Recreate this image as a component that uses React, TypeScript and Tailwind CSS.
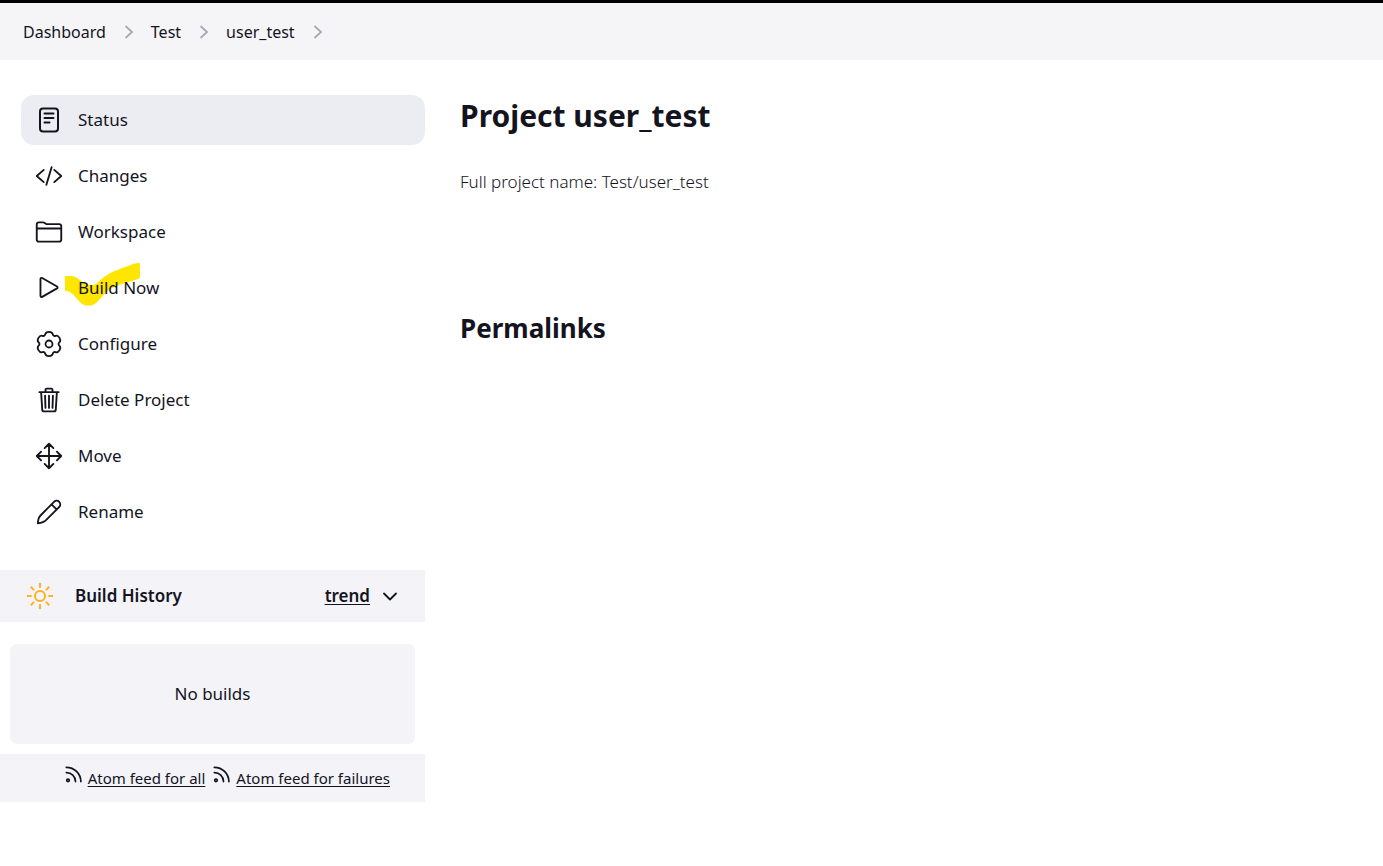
import type { ReactNode } from "react";

const strokeProps = {
  viewBox: "0 0 512 512",
  fill: "none",
  stroke: "currentColor",
  strokeWidth: 34,
  strokeLinecap: "round" as const,
  strokeLinejoin: "round" as const,
  "aria-hidden": true,
};

// Outline of a six-lobed gear centred in a 28-unit box, smoothed with quadratic curves.
function gearPath() {
  const points: [number, number][] = [];
  for (let lobe = 0; lobe < 6; lobe++) {
    const base = lobe * 60 - 90;
    for (const [offset, radius] of [[-15, 12.6], [15, 12.6], [30, 8.6]]) {
      const angle = ((base + offset) * Math.PI) / 180;
      points.push([14 + radius * Math.cos(angle), 14 + radius * Math.sin(angle)]);
    }
  }
  const mid = (i: number) => {
    const a = points[i % points.length];
    const b = points[(i + 1) % points.length];
    return `${((a[0] + b[0]) / 2).toFixed(2)} ${((a[1] + b[1]) / 2).toFixed(2)}`;
  };
  let d = `M${mid(0)}`;
  for (let i = 1; i <= points.length; i++) {
    const p = points[i % points.length];
    d += `Q${p[0].toFixed(2)} ${p[1].toFixed(2)} ${mid(i)}`;
  }
  return d + "z";
}

const icons: Record<string, ReactNode> = {
  Status: (
    <svg {...strokeProps} viewBox="0 0 28 28" strokeWidth={2} className="size-7">
      <rect x="5" y="2.5" width="18" height="23" rx="3" />
      <path d="M9.5 7.5h9M9.5 12h9M9.5 16.5h5" />
    </svg>
  ),
  Changes: (
    <svg {...strokeProps} className="size-7">
      <path d="M160 368L32 256l128-112M352 368l128-112-128-112M304 96l-96 320" />
    </svg>
  ),
  Workspace: (
    <svg {...strokeProps} className="size-7">
      <path d="M440 432H72a40 40 0 01-40-40V120a40 40 0 0140-40h75.89a40 40 0 0122.19 6.72l27.84 18.56a40 40 0 0022.19 6.72H440a40 40 0 0140 40v240a40 40 0 01-40 40zM32 192h448" />
    </svg>
  ),
  "Build Now": (
    <svg {...strokeProps} className="size-7">
      <path d="M100 93v306c0 17 17 28 31 20l272-156c13-8 13-26 0-34L131 73c-14-8-31 3-31 20z" />
    </svg>
  ),
  Configure: (
    <svg {...strokeProps} viewBox="0 0 28 28" strokeWidth={1.8} className="size-7">
      <path d={gearPath()} />
      <circle cx="14" cy="14" r="3.5" />
    </svg>
  ),
  "Delete Project": (
    <svg {...strokeProps} className="size-7">
      <path d="M112 112l20 320c.95 18.49 14.4 32 32 32h184c17.67 0 30.87-13.51 32-32l20-320M80 112h352M192 112V72a23.93 23.93 0 0124-24h80a23.93 23.93 0 0124 24v40M256 176v224M184 176l8 224M328 176l-8 224" />
    </svg>
  ),
  Move: (
    <svg {...strokeProps} className="size-7">
      <path d="M176 112l80-80 80 80M256 32v448M176 400l80 80 80-80M400 176l80 80-80 80M112 176l-80 80 80 80M32 256h448" />
    </svg>
  ),
  Rename: (
    <svg {...strokeProps} viewBox="0 0 28 28" strokeWidth={1.8} className="size-7">
      <path d="M2.8 25.3C3 22 4 19 5.5 17.5L19 3.8a3.6 3.6 0 0 1 5.2 5.2L10.5 22.6C9 24 6 25 2.8 25.3zM16.5 6.3l5.2 5.2" />
    </svg>
  ),
};

function Chevron() {
  return (
    <svg viewBox="0 0 10 16" className="h-4 w-[10px] text-[#a9a7b8]" fill="none" stroke="currentColor" strokeWidth="1.8" aria-hidden>
      <path d="M1.5 2l6.5 6-6.5 6" />
    </svg>
  );
}

function FeedLink({ label }: { label: string }) {
  return (
    <a href="#" className="flex gap-[6px] text-[15px] leading-6 underline underline-offset-2">
      <svg viewBox="0 0 17 17" className="size-[17px]" fill="none" stroke="currentColor" strokeWidth="1.7" strokeLinecap="round" aria-hidden>
        <circle cx="3" cy="14.3" r="1.3" />
        <path d="M1.3 6.6a9 9 0 0 1 9.2 9M1.3 1.3a14.5 14.5 0 0 1 14.6 14.3" />
      </svg>
      {label}
    </a>
  );
}

export default function App() {
  return (
    <div className="font-['Noto_Sans','Segoe_UI',sans-serif] text-[#14141f]">
      <nav aria-label="Breadcrumb" className="border-t-[3px] border-black bg-[#f5f5f8]">
        <ol className="flex h-[57px] items-center gap-[17px] px-[23px] text-[16px]">
          {["Dashboard", "Test", "user_test"].map((crumb) => (
            <li key={crumb} className="flex items-center gap-[18px]">
              <a href="#">{crumb}</a>
              <Chevron />
            </li>
          ))}
        </ol>
      </nav>

      <div className="flex">
        <aside className="w-[425px] shrink-0 pt-[35px]">
          <nav aria-label="Project" className="flex flex-col gap-[6px] pl-[21px]">
            {Object.entries(icons).map(([label, icon]) => (
              <a
                key={label}
                href="#"
                aria-current={label === "Status" ? "page" : undefined}
                className="relative flex h-[50px] items-center gap-[15px] rounded-[13px] px-[14px] pb-px text-[17px] font-[450] aria-[current]:bg-[#ecedf3]"
              >
                {label === "Build Now" && (
                  <svg viewBox="0 0 76 44" className="absolute top-0 left-11 h-11 w-[76px]" fill="#ffe600" aria-hidden>
                    <path d="M0 13h6c7 0 11 8 19 9 7 1 8-4 14-8C47 8 58 5 68 1q3-1 7-1v15C64 20 54 20 44 27c-7 5-11 13-16 15-4 1-9 1-12-2C11 36 8 28 0 28z" />
                  </svg>
                )}
                {icon}
                <span className="relative">{label}</span>
              </a>
            ))}
          </nav>

          <section aria-label="Build History" className="mt-[33px]">
            <div className="flex h-[52px] items-center bg-[#f3f3f8] pr-[27px] pl-[26px] text-[17px] font-semibold">
              <svg {...strokeProps} strokeWidth={36} strokeLinecap="butt" className="size-7 text-[#ffb21a]">
                <circle cx="256" cy="256" r="92" />
                <path d="M256 18v86M256 408v86M424 88l-60 60M148 364l-60 60M494 256h-86M104 256H18M424 424l-60-60M148 148L88 88" />
              </svg>
              <h2 className="ml-[21px]">Build History</h2>
              <a href="#" className="ml-auto underline underline-offset-2">trend</a>
              <button type="button" aria-label="Collapse build history" className="ml-3">
                <svg viewBox="0 0 16 16" className="size-4" fill="none" stroke="currentColor" strokeWidth="1.8" strokeLinecap="round" strokeLinejoin="round" aria-hidden>
                  <path d="M2 5.5l6 6 6-6" />
                </svg>
              </button>
            </div>
            <div className="mx-[10px] mt-[22px] flex h-[100px] items-center justify-center rounded-[7px] bg-[#f3f3f8] text-[17px]">
              No builds
            </div>
            <div className="mt-[10px] flex h-12 items-center justify-end gap-2 bg-[#f3f3f8] pr-[35px]">
              <FeedLink label="Atom feed for all" />
              <FeedLink label="Atom feed for failures" />
            </div>
          </section>
        </aside>

        <main className="min-w-0 flex-1 px-[35px] pt-[35px]">
          <h1 className="text-[30px] leading-[42px] font-bold">Project user_test</h1>
          <p className="mt-8 text-[17px] leading-[26px] font-light">Full project name: Test/user_test</p>
          <h2 className="mt-[115px] text-[26px] leading-9 font-bold">Permalinks</h2>
        </main>
      </div>
    </div>
  );
}
